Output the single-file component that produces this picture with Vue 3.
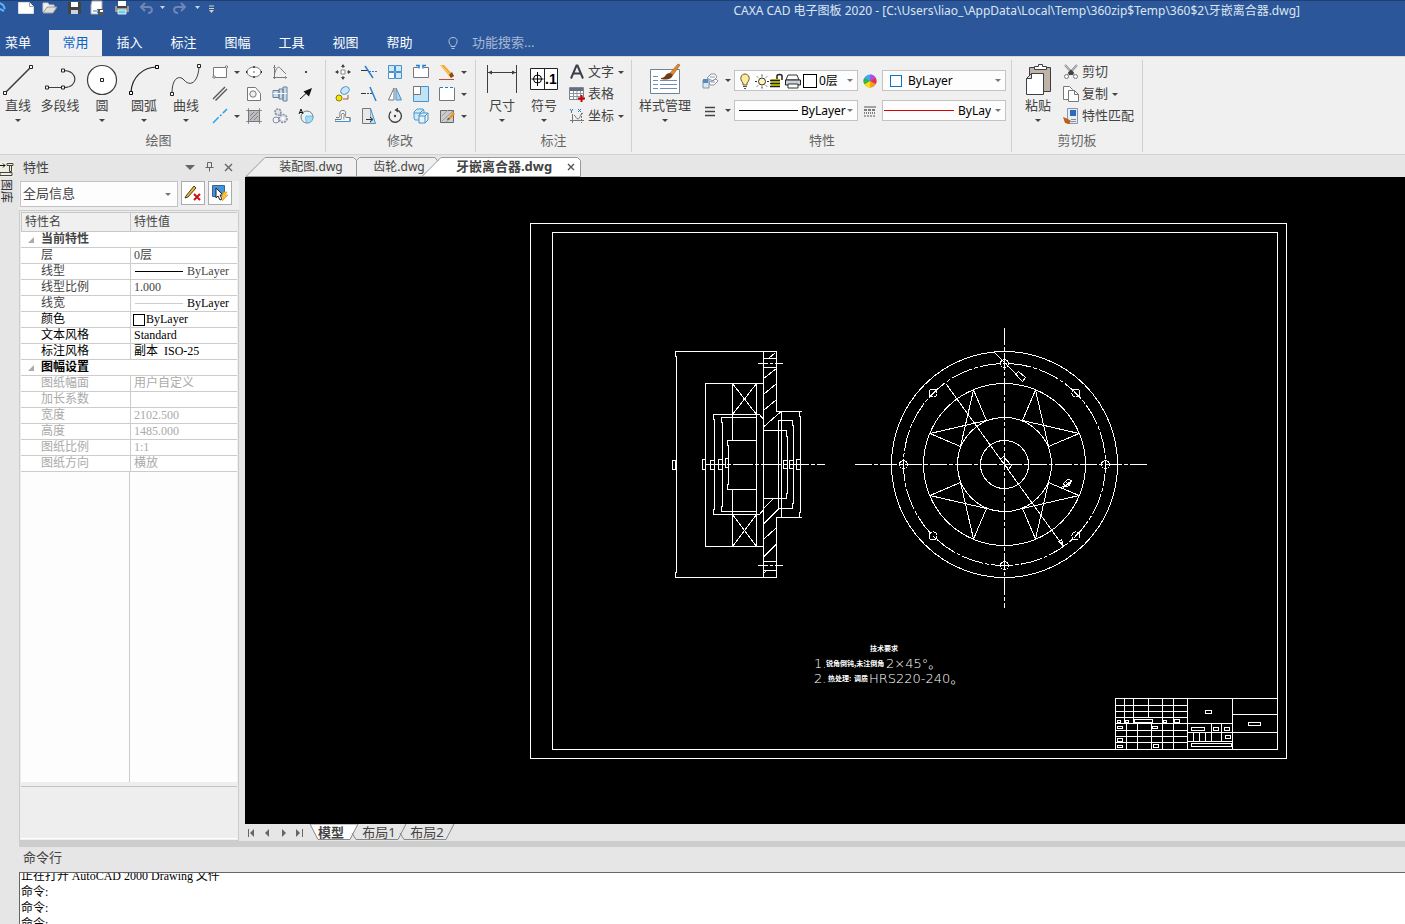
<script setup>
import { ref } from 'vue'

const icons = {
  line: '<path d="M4 30 31 3" stroke="#3b3f46" stroke-width="1.6"/><g fill="#fff" stroke="#222"><path d="M2.500 28.500h3v3h-3zM28.500 2.500h3v3h-3z"/></g>',
  pline: '<path d="M5 24.500h16M21 7.500c14 0 15 17 0 17" stroke="#3b3f46" stroke-width="1.200" fill="none"/><g fill="#fff" stroke="#222"><path d="M2.500 23h3v3h-3zM18.500 23h3v3h-3zM18.500 6h3v3h-3z"/></g>',
  circle: '<circle cx="17" cy="17" r="14.500" fill="#fff" stroke="#3b3f46" stroke-width="1.200"/><path d="M15.500 15.500h3v3h-3z" fill="#fff" stroke="#222"/>',
  arc: '<path d="M4 29C5 14 16 4 30 4" stroke="#222" stroke-width="1.200" fill="none"/><g fill="#fff" stroke="#000"><path d="M2.500 28.500h3v3h-3zM28.500 2.500h3v3h-3z"/></g>',
  curve: '<path d="M3 30c0-16 8-18 12-13 6 7 14 3 15-13" stroke="#3b3f46" fill="none"/><g fill="#fff" stroke="#222"><path d="M1.500 29.500h3v3h-3zM28.500 1.500h3v3h-3z"/></g>',
  dim: '<path d="M2.500 2v28M31.500 2v28M3 9.500h28" stroke="#3b3f46" fill="none"/><path d="M3 9.500l4-2v4zM31 9.500l-4-2v4z" fill="#3b3f46"/>',
  symbol: '<path d="M3.500 5.500h27v21h-27zM17.500 5.500v21" fill="#fff" stroke="#222"/><circle cx="10.500" cy="16" r="4" fill="none" stroke="#000"/><path d="M10.500 9v14M4.500 16h12" stroke="#000"/><text x="18" y="21" font-family="Liberation Sans,sans-serif" font-weight="bold" font-size="14">.1</text>',
  style: '<path d="M2.500 6.500h29v24h-29z" fill="#fff" stroke="#6f8399"/><path d="M5 13.500h5M5 17.500h5M5 21.500h5M5 25.500h5M12 17.500h17M12 21.500h17M12 25.500h17" stroke="#6d8db5"/><path d="M22 10l8-9 2 1-7 10z" fill="#e08a2c" stroke="#9b5a15" stroke-width=".6"/><path d="M13 15c5 0 4-5 9-5l3 2c-2 5-6 5-12 4z" fill="#6b3c16"/>',
  paste: '<path d="M8.500 4.500h21v24h-21z" fill="#bfb3a6" stroke="#3b3f46"/><path d="M13.500 6.500v-3h4v-2h4v2h4v3z" fill="#fff" stroke="#3b3f46"/><path d="M5.500 15.500l5-5h12v21h-17z" fill="#fff" stroke="#3b3f46"/><path d="M5.500 15.500h5v-5z" fill="#ddd" stroke="#3b3f46"/>',
  rect: '<path d="M1.500 3.500h13v10h-13z" fill="#fff" stroke="#777"/><g fill="#fff" stroke="#777"><circle cx="2" cy="13" r="1.200"/><circle cx="14.500" cy="3" r="1.200"/></g>',
  ellipse: '<ellipse cx="8" cy="8" rx="7" ry="5" fill="#fff" stroke="#777"/><path d="M7 3h2M7 13h2M.5 7v2M15.500 7v2M8 7.500v1" stroke="#333" stroke-width="1.500"/>',
  graph: '<path d="M2.500 1v14M1 13.500h14M2.500 10C5 2 7 2 9 5l5 5" fill="none" stroke="#777"/><path d="M1 3.500h3M13.500 12v3" stroke="#999"/>',
  dot: '<path d="M7 7h2v2H7z" fill="#444"/>',
  parallel: '<path d="M1 13 13 1M3.500 14.500 15 3" stroke="#555" stroke-width="1.400"/>',
  polygonHole: '<path d="M1.500 1.500h8l5 6v7h-13z" fill="#fff" stroke="#777"/><circle cx="7" cy="8" r="3.200" fill="#eee" stroke="#777"/>',
  shaft: '<path d="M1 4.500h6v7H1zM7 3h4v10H7zM11 1h4v14h-4z" fill="#c5dcf0" stroke="#6c7f96"/><path d="M1 7.500h14" stroke="#fff"/>',
  arrow: '<path d="M2 13 8 7.500" stroke="#111"/><path d="M14 2 11 10.500 5.500 5.500z" fill="#111"/>',
  cline: '<path d="M1 15 15 1" stroke="#29a3e8" stroke-width="1.500" stroke-dasharray="8 2 2 2"/>',
  hatch: '<path d="M2.500 2.500h11v11h-11z" fill="#b9bcc0" stroke="#777"/><path d="M0 2.500h16M0 13.500h16M2.500 0v16M13.500 0v16M4 12l8-8M4 8l4-4M8 12l4-4" stroke="#777" stroke-width=".8"/>',
  gears: '<circle cx="6" cy="4" r="3" fill="#dfe1ea" stroke="#858da0" stroke-width="1.600" stroke-dasharray="2 1"/><circle cx="11" cy="10.500" r="4" fill="#dfe1ea" stroke="#858da0" stroke-dasharray="2 1" stroke-width="1.600"/><circle cx="11" cy="10.500" r="1.500" fill="#fff"/><circle cx="4" cy="12" r="3" fill="#f2f2f6" stroke="#858da0"/>',
  revolve: '<circle cx="9" cy="9" r="6" fill="#e6f4fc" stroke="#777"/><path d="M8 8h7c0 4-2 7-5 7-2-1-3-3-2-7z" fill="#a5dbf7" stroke="#4a9ad0" stroke-width=".6"/><path d="M1 6 3 1l2 5M2 4.500h2.500" stroke="#111" fill="none"/>',
  move: '<path d="M6 6h4v4H6z" fill="#fff" stroke="#888"/><path d="M8 1v3M8 12v3M1 8h3M12 8h3" stroke="#444"/><path d="M8 0l2 3H6zM8 16l2-3H6zM0 8l3-2v4zM16 8l-3-2v4z" fill="#444"/>',
  trim: '<path d="M0 6.500h7" stroke="#333"/><path d="M8 7.500h8" stroke="#2b7fd0" stroke-dasharray="2 1"/><path d="M4 2l8 12" stroke="#2b7fd0" stroke-width="1.500"/>',
  array: '<path d="M1.500 1.500h6v6h-6zM8.500 1.500h6v6h-6zM1.500 8.500h6v6h-6zM8.500 8.500h6v6h-6z" fill="#cdeafb" stroke="#4a8fc7"/><path d="M2 9h5v5H2z" fill="#fff"/>',
  brk: '<path d="M5 3.500H.5v10h15v-10H11" fill="#fff" stroke="#777"/><path d="M3 1.500h3v3M13 1.500h-3v3" stroke="#1c7dd6" fill="none" stroke-width="1.500"/>',
  pencil: '<path d="M1 1h4l10 11-3 2z" fill="#f5a623"/><path d="M2 1 13 13" stroke="#fbd38d"/><path d="M10 11l3-3 2 4-3 2z" fill="#8b4a1c"/><path d="M0 15.500h15" stroke="#b3513c"/>',
  copy: '<ellipse cx="10" cy="4.500" rx="4.500" ry="3.500" fill="#c9e6f8" stroke="#4a8fc7" transform="rotate(-35 10 4.500)"/><circle cx="4" cy="12" r="3" fill="#f7e400" stroke="#8a8000"/><path d="M8 13h5V9" fill="none" stroke="#b3513c"/>',
  extend: '<path d="M0 7.500h5" stroke="#333"/><path d="M6 7.500h5" stroke="#444" stroke-dasharray="2 1"/><path d="M9 1l6 14" stroke="#2b7fd0" stroke-width="1.500"/>',
  mirror: '<path d="M7 2v12H1.500z" fill="#fff" stroke="#777"/><path d="M9 2v12h5.500z" fill="#a9d4ef" stroke="#4a8fc7"/>',
  scale: '<path d="M.5.5h15v15H.5z" fill="#bfe4f8" stroke="#4a8fc7"/><path d="M.5.5h7v8h-7z" fill="#fff" stroke="#777"/>',
  stretch: '<path d="M.5 1.500v13h15v-13" fill="#fff" stroke="#777"/><path d="M1 1.500h14" stroke="#1c7dd6" stroke-dasharray="3 2"/>',
  offset: '<path d="M1 9.500h3c2-2-1-7 4-7s1 5 3 7h4v4H0v-2h6c1-3-1-6 2-6s0 3 1 6" fill="#f6fafd" stroke="#777"/><path d="M15 9.500v4H0" fill="none" stroke="#4a8fc7"/>',
  taper: '<path d="M1.500.5h8v15h-8z" fill="#e8e8e8" stroke="#777"/><path d="M9.500.5l5 15h-5" fill="#bfe4f8" stroke="#4a8fc7"/><path d="M5 11.500h6M9 9l3 2.500L9 14" stroke="#333" fill="none"/>',
  rotate: '<path d="M4 3.500A6.200 6.200 0 1 0 9.500 2" fill="none" stroke="#444" stroke-width="1.400"/><path d="M11-.5v5L7.500 2z" fill="#444"/><circle cx="8" cy="8" r="1.200" fill="#444"/>',
  block: '<path d="M1 4l3-3h6l1 2v7l-3 2H2l-1-2z" fill="#cfe9f9" stroke="#4a9ad0"/><path d="M1 5h6v6M7 5l3-3" fill="none" stroke="#4a9ad0"/><path d="M6 7l3-2h6v7l-3 3H6z" fill="#e4f3fc" stroke="#4a8fc7"/><path d="M6 8h6v7M12 8l3-3" fill="none" stroke="#4a8fc7"/>',
  edit: '<path d="M1.500 2.500h13v12h-13z" fill="#ccc" stroke="#666"/><path d="M3 13 14 3M3 8l6-6M7 14l7-6" stroke="#999"/><path d="M9 10l5-6 2 2-5 5z" fill="#f0962c"/><path d="M9 10l2 1-3 1z" fill="#333"/>',
  letterA: '<path d="M2 14.500 7.500 1.500h1L14 14.500M4.500 9.500h7" fill="none" stroke="#3b3f46" stroke-width="2"/>',
  table: '<path d="M.5 1.500h14v12H.5z" fill="#fff" stroke="#7c8794"/><path d="M1 2h13v3H1z" fill="#66707c"/><path d="M1 7.500h13M1 10.500h13M4.500 5v8M8 5v8M11.500 5v8" stroke="#8c97a4"/><path d="M12.500 9v7M9 12.500h7" stroke="#c00" stroke-width="2"/>',
  coord: '<path d="M3.500 6v9M1 12.500h14M5 7c2 1 2 4 4 4s2-5 5-6" fill="none" stroke="#777"/><path d="M1 1l1.500 2L4 1M2.500 3v2M9 1l3 3M12 1 9 4" stroke="#2b7fd0"/><path d="M12.500 5v10" stroke="#777" stroke-dasharray="2 1"/>',
  layers: '<path d="M5 5l4-4h4l2 3-4 4zM7 9l7-3 2 2-4 4H8z" fill="#fff" stroke="#8a95a3"/><path d="M1 7h6v8H1z" fill="#dfe7ee" stroke="#8a95a3"/><path d="M1 6h5v4H1z" fill="#4b8bc8"/><path d="M8 4h5M9 9h4" stroke="#8a95a3"/>',
  lines: '<path d="M3 4.500h10M3 8.500h10M3 12.500h10" stroke="#444" stroke-width="1.400"/>',
  wheel: '<circle cx="8" cy="8" r="6.500" fill="#3fa9f5"/><path d="M8 8V1.500a6.500 6.500 0 0 1 5.600 3.200z" fill="#b04ee0"/><path d="M8 8l5.600-3.300a6.500 6.500 0 0 1 0 6.600z" fill="#e8304a"/><path d="M8 8l5.600 3.300A6.500 6.500 0 0 1 8 14.500z" fill="#ff9b1a"/><path d="M8 8v6.500a6.500 6.500 0 0 1-5.600-3.200z" fill="#ffe100"/><path d="M8 8l-5.600 3.300a6.500 6.500 0 0 1 0-6.600z" fill="#37b34a"/>',
  linetypes: '<path d="M2 4h12" stroke="#555"/><path d="M2 7h12" stroke="#555" stroke-dasharray="3 1" stroke-width="1.500"/><path d="M2 10h12" stroke="#555" stroke-dasharray="1 1" stroke-width="1.500"/><path d="M2 13h12" stroke="#555" stroke-dasharray="2 1"/>',
  cut: '<path d="M2 1l9 10M14 1 5 11" stroke="#7d838b" stroke-width="2"/><path d="M2 1l9 10M14 1 5 11" stroke="#eee" stroke-width=".7"/><path d="M5 8.500l3-3 3 3-1 2.500H6z" fill="#444"/><circle cx="3.500" cy="12.500" r="2" fill="#fff" stroke="#777"/><circle cx="12.500" cy="12.500" r="2" fill="#fff" stroke="#777"/>',
  copyDoc: '<path d="M.5.5h6l3 3v10h-9z" fill="#fff" stroke="#777"/><path d="M5.500 4.500h6l4 4v7h-10z" fill="#fff" stroke="#777"/><path d="M11.500 4.500v4h4" fill="none" stroke="#777"/>',
  match: '<path d="M4.500.5h10v15h-10z" fill="#e8eef4" stroke="#8a95a3"/><path d="M7 2h6v6H7z" fill="#2b6cb8"/><path d="M8 11.500h5M8 13.500h5" stroke="#889"/><path d="M0 9l5 2 3 2-2 3-4-1-1-3z" fill="#b9611c"/>'
}

const drawBig = [['line', '直线', 1], ['pline', '多段线', 0], ['circle', '圆', 1], ['arc', '圆弧', 1], ['curve', '曲线', 1]]
const drawSmall = [
  ['rect', '矩形', 1], ['ellipse', '椭圆'], ['graph', '公式曲线'], ['dot', '点'],
  ['parallel', '平行线'], ['polygonHole', '多边形'], ['shaft', '孔轴'], ['arrow', '箭头'],
  ['cline', '中心线', 1], ['hatch', '剖面线'], ['gears', '齿轮'], ['revolve', '局部放大']
]
const modifySmall = [
  ['move', '平移'], ['trim', '裁剪'], ['array', '阵列'], ['brk', '打断'], ['pencil', '删除', 1],
  ['copy', '平移复制'], ['extend', '延伸'], ['mirror', '镜像'], ['scale', '缩放'], ['stretch', '拉伸', 1],
  ['offset', '等距线'], ['taper', '过渡'], ['rotate', '旋转'], ['block', '分解'], ['edit', '编辑', 1]
]
const markSmall = [['letterA', '文字', 1], ['table', '表格', 0], ['coord', '坐标', 1]]
const clipSmall = [['cut', '剪切', 0], ['copyDoc', '复制', 1], ['match', '特性匹配', 0]]

const tabs = ['常用', '插入', '标注', '图幅', '工具', '视图', '帮助']
const activeTab = ref('常用')

const props = [
  { name: '当前特性', group: 1 },
  { name: '层', num: '0', cjk: '层' },
  { name: '线型', line: 'dark', num: 'ByLayer' },
  { name: '线型比例', num: '1.000' },
  { name: '线宽', line: 'pale', num: 'ByLayer', tone: 'value' },
  { name: '颜色', swatch: 1, num: 'ByLayer', tone: 'black' },
  { name: '文本风格', num: 'Standard', tone: 'black' },
  { name: '标注风格', pre: '副本', num: '  ISO-25', tone: 'black' },
  { name: '图幅设置', group: 1, tone: 'black' },
  { name: '图纸幅面', cjk: '用户自定义', tone: 'off' },
  { name: '加长系数', tone: 'off' },
  { name: '宽度', num: '2102.500', tone: 'off' },
  { name: '高度', num: '1485.000', tone: 'off' },
  { name: '图纸比例', num: '1:1', tone: 'off' },
  { name: '图纸方向', cjk: '横放', tone: 'off' }
]

const holes = Array.from({ length: 8 }, (_, i) => {
  const a = (i * Math.PI) / 4
  return { x: 1004.5 + 101 * Math.cos(a), y: 464.5 + 101 * Math.sin(a) }
})
const mirrors = [[1, 1], [-1, 1], [1, -1], [-1, -1]]
const terminals = [
  [672, 460, 3, 9], [702, 459, 3, 10], [710, 460, 4, 9], [718, 459, 4, 10], [725, 458, 3, 9],
  [783, 460, 4, 8], [789, 460, 4, 8], [796, 459, 4, 10]
]
const fields = [
  [1117, 720, 3, 2], [1125, 720, 3, 2], [1134, 719, 18, 3], [1163, 720, 3, 2], [1174, 719, 5, 3],
  [1117, 726, 5, 2], [1152, 726, 5, 2], [1117, 738, 5, 3], [1117, 745, 5, 2], [1153, 744, 5, 3],
  [1205, 710, 6, 3], [1191, 727, 13, 3], [1213, 727, 5, 3], [1224, 727, 5, 3], [1225, 735, 5, 3],
  [1191, 743, 40, 3], [1248, 722, 12, 3]
]
const log = ['命令', '命令', '命令']
</script>

<template>
  <div class="app">
    <header class="top">
      <div class="titlebar">
        <svg class="quick" width="220" height="18" viewBox="0 0 220 18" fill="none">
          <path d="M0 3l3 2 2 4M0 9l4 2" stroke="#5cb3ff" stroke-width="2" />
          <path d="M18.500 2.500h11l4 4v7h-15z" fill="#fff" stroke="#ddd" /><path d="M29.500 2.500v4h4" stroke="#8aa" />
          <path d="M43 12V3h5l1 2h5v3" fill="#f2f2f2" stroke="#ccc" /><path d="M43 13l4-6h10l-4 6z" fill="#ddd" stroke="#999" />
          <path d="M68 2h13v12H68z" fill="#444" /><path d="M71 2h7v5h-7z" fill="#fff" /><path d="M71 10h7v4h-7z" fill="#c8d4e4" />
          <path d="M92 1h10v13H91V5z" fill="#fff" stroke="#aaa" /><path d="M93 11h6l-2-2m2 2-2 2" stroke="#2b7fd0" /><path d="M98 9h6v6h-6z" fill="#555" /><path d="M100 10h3v2h-3z" fill="#fff" />
          <path d="M118 1h8v5h-8z" fill="#fff" /><path d="M115 6h14v6h-14z" fill="#999" /><path d="M117 6h10v2h-10z" fill="#444" /><path d="M118 10h8v4h-8z" fill="#5fd4f5" stroke="#eee" />
          <path d="M142 7h7c4 0 4 6-1 6M145 3l-4 4 4 4" stroke="#7186b4" stroke-width="2" />
          <path d="M184 7h-7c-4 0-4 6 1 6M181 3l4 4-4 4" stroke="#7186b4" stroke-width="2" />
          <path d="M160 6h5l-2.500 3zM195 6h5l-2.500 3z" fill="#c7d1e3" />
          <path d="M209 6h5M209 8.500h5" stroke="#d6cfc3" /><path d="M209 10h5l-2.500 3z" fill="#d6cfc3" />
        </svg>
        <h1>CAXA CAD 电子图板 2020 - [C:\Users\liao_\AppData\Local\Temp\360zip$Temp\360$2\牙嵌离合器.dwg]</h1>
      </div>
      <nav class="tabs">
        <button class="menu">菜单</button>
        <button v-for="t in tabs" :key="t" class="tab" :class="{ on: t === activeTab }" @click="activeTab = t">{{ t }}</button>
        <label class="search">
          <svg width="12" height="14" viewBox="0 0 12 14" fill="none" stroke="#b9c5da"><path d="M4 9.500C1 7 1 1.500 6 1.500S11 7 8 9.500v1H4zM4.500 12.500h3" /></svg>
          <input type="text" placeholder="功能搜索..." aria-label="功能搜索" />
        </label>
      </nav>
    </header>

    <section class="ribbon">
      <div class="group">
        <div class="tools">
          <button v-for="b in drawBig" :key="b[0]" class="big">
            <svg width="34" height="34" viewBox="0 0 34 34" v-html="icons[b[0]]"></svg>
            <span>{{ b[1] }}</span><i v-if="b[2]" class="caret"></i>
          </button>
          <div class="small draw">
            <button v-for="b in drawSmall" :key="b[0]" :aria-label="b[1]">
              <svg width="16" height="16" viewBox="0 0 16 16" fill="none" v-html="icons[b[0]]"></svg><i v-if="b[2]" class="caret"></i>
            </button>
          </div>
        </div>
        <h2>绘图</h2>
      </div>

      <div class="group modify">
        <div class="tools">
          <div class="small edit">
            <button v-for="b in modifySmall" :key="b[0]" :aria-label="b[1]">
              <svg width="16" height="16" viewBox="0 0 16 16" fill="none" v-html="icons[b[0]]"></svg><i v-if="b[2]" class="caret"></i>
            </button>
          </div>
        </div>
        <h2>修改</h2>
      </div>

      <div class="group mark">
        <div class="tools">
          <button class="big"><svg width="34" height="34" viewBox="0 0 34 34" v-html="icons.dim"></svg><span>尺寸</span><i class="caret"></i></button>
          <button class="big"><svg width="34" height="34" viewBox="0 0 34 34" v-html="icons.symbol"></svg><span>符号</span><i class="caret"></i></button>
          <div class="list">
            <button v-for="b in markSmall" :key="b[0]">
              <svg width="16" height="16" viewBox="0 0 16 16" fill="none" v-html="icons[b[0]]"></svg><span>{{ b[1] }}</span><i v-if="b[2]" class="caret"></i>
            </button>
          </div>
        </div>
        <h2>标注</h2>
      </div>

      <div class="group attr">
        <div class="tools">
          <button class="big wide"><svg width="34" height="34" viewBox="0 0 34 34" v-html="icons.style"></svg><span>样式管理</span><i class="caret"></i></button>
          <div class="combos">
            <button class="mini" aria-label="图层"><svg width="16" height="16" viewBox="0 0 16 16" fill="none" v-html="icons.layers"></svg><i class="caret"></i></button>
            <div class="combo layer">
              <svg width="72" height="18" viewBox="0 0 72 18" fill="none">
                <path d="M4 11C0 7 2 2 6 2s6 5 2 9v2H4z" fill="#ffe9a0" stroke="#665b2a" /><path d="M4 14.500h4M5 16.500h2" stroke="#555" />
                <circle cx="23" cy="9.500" r="3.500" fill="#fff2b8" stroke="#333" /><path d="M23 2.500v2M23 14.500v2M16 9.500h2M28 9.500h2M18 4.500l1 1M27 13.500l1 1M28 4.500l-1 1M19 13.500l-1 1" stroke="#333" />
                <path d="M32 7h9v8h-9z" fill="#dcd800" /><path d="M31 8.500h10M31 11.500h10M31 14.500h10" stroke="#222" stroke-width="1.500" /><path d="M38 7V4c0-2 5-2 5 0v4" stroke="#222" stroke-width="1.500" />
                <path d="M49 3h9l2 5H47z" fill="#fff" stroke="#333" /><path d="M46.500 8h15v5h-15z" fill="#ccd3da" stroke="#222" /><path d="M49 12h10v4H49z" fill="#fff" stroke="#333" />
              </svg>
              <b class="sw"></b>
              <select aria-label="图层列表"><option>0层</option></select><i class="caret"></i>
            </div>
            <svg class="mid" width="16" height="16" viewBox="0 0 16 16" fill="none" v-html="icons.wheel"></svg>
            <div class="combo color"><b class="sw blue"></b><select aria-label="颜色"><option>ByLayer</option></select><i class="caret"></i></div>
            <button class="mini" aria-label="线宽"><svg width="16" height="16" viewBox="0 0 16 16" fill="none" v-html="icons.lines"></svg><i class="caret"></i></button>
            <div class="combo width"><b class="rule"></b><select aria-label="线宽列表"><option>ByLayer</option></select><i class="caret"></i></div>
            <svg class="mid" width="16" height="16" viewBox="0 0 16 16" fill="none" v-html="icons.linetypes"></svg>
            <div class="combo type"><b class="rule red"></b><select aria-label="线型列表"><option>ByLayer</option></select><i class="caret"></i></div>
          </div>
        </div>
        <h2>特性</h2>
      </div>

      <div class="group clip">
        <div class="tools">
          <button class="big"><svg width="34" height="34" viewBox="0 0 34 34" v-html="icons.paste"></svg><span>粘贴</span><i class="caret"></i></button>
          <div class="list">
            <button v-for="b in clipSmall" :key="b[0]">
              <svg width="16" height="16" viewBox="0 0 16 16" fill="none" v-html="icons[b[0]]"></svg><span>{{ b[1] }}</span><i v-if="b[2]" class="caret"></i>
            </button>
          </div>
        </div>
        <h2>剪切板</h2>
      </div>
    </section>

    <div class="body">
      <aside class="strip">
        <svg width="14" height="16" viewBox="0 0 14 16" fill="none"><path d="M0 0h14v16H0z" fill="#efefdf" /><path d="M0 4.500h5M3 2.500l2 2-2 2" stroke="#111" /><path d="M7 2.500h6v2H7zM9.500 4.500v6h2v-6M0 11.500h12v3H0z" stroke="#444" /></svg>
        <span>图库</span>
      </aside>

      <div class="right">
        <div class="work">
          <aside class="panel">
            <div class="phead">
              <h3>特性</h3>
              <svg width="52" height="14" viewBox="0 0 52 14" fill="none">
                <path d="M1 5h10l-5 5z" fill="#666" /><path d="M23.500 2.500h4v5h-4zM21.500 7.500h8M25.500 7.500v4" stroke="#666" /><path d="M41 4l7 7M48 4l-7 7" stroke="#666" stroke-width="1.400" />
              </svg>
            </div>
            <div class="pick">
              <div class="combo scope"><select aria-label="选择范围"><option>全局信息</option></select><i class="caret"></i></div>
              <button aria-label="取消选择"><svg width="18" height="18" viewBox="0 0 18 18" fill="none"><path d="M2 12 10 2l2 2-8 9-3 1z" fill="#f2b632" stroke="#4b3b1c" /><path d="M10 10l6 6M16 10l-6 6" stroke="#c11" stroke-width="2" /></svg></button>
              <button aria-label="快速选择"><svg width="18" height="18" viewBox="0 0 18 18" fill="none"><path d="M1.500 1.500h12v11h-12z" fill="#4592d6" stroke="#2c67a3" /><path d="M5 4v10l2-2 2 4 2-1-2-4h3z" fill="#fff" stroke="#222" /><path d="M13 8l-3 5h3l-2 4 6-6h-3l2-3z" fill="#ffc928" stroke="#e08a1c" stroke-width=".6" /></svg></button>
            </div>
            <div class="grid">
              <table>
                <thead><tr><th>特性名</th><th>特性值</th></tr></thead>
                <tbody>
                  <tr v-for="p in props" :key="p.name" :class="p.tone">
                    <th v-if="p.group" colspan="2" class="sec"><i></i>{{ p.name }}</th>
                    <template v-else>
                      <td class="name">{{ p.name }}</td>
                      <td class="val"><div><b v-if="p.line" class="stroke" :class="p.line"></b><b v-if="p.swatch" class="chip"></b><template v-if="p.pre">{{ p.pre }}</template><span v-if="p.num">{{ p.num }}</span>{{ p.cjk }}</div></td>
                    </template>
                  </tr>
                </tbody>
              </table>
              <div class="blank"></div>
              <div class="desc"></div>
            </div>
          </aside>

          <main class="doc">
            <div class="files">
              <svg width="340" height="21" viewBox="0 0 340 21" stroke="#999">
                <path d="M1 20.500 20 1.500H108.500l3 3V20.500z" fill="#f0f0f0" /><path d="M111.500 20.500V4.500l3-3H190l3 4-10 15z" fill="#f0f0f0" /><path d="M177 20.500 196 1.500H332.500l3 3V20.500z" fill="#fff" />
              </svg>
              <button class="f1">装配图.dwg</button>
              <button class="f2">齿轮.dwg</button>
              <button class="f3">牙嵌离合器.dwg</button>
              <button class="close" aria-label="关闭"><svg width="8" height="8" viewBox="0 0 8 8" stroke="#555" stroke-width="1.400"><path d="M1 1l6 6M7 1 1 7" /></svg></button>
            </div>
            <div class="canvas">
              <svg viewBox="245 177 1160 647" fill="none" stroke="#fff" shape-rendering="crispEdges">
                <path d="M530.500 223.500h756v535h-756zM552.500 232.500h725v517h-725z" />

                <path d="M763.500 351.500h-88v5h1v216h-1v5h101v-60h25M763.500 351.500h13v60h25M763.500 351.500v226M763.500 358.500h13M763.500 367.500h13M763.500 561.500h13M763.500 570.500h13" />
                <path d="M758 363.500h25M758 565.500h25" stroke-dasharray="10 2 3 2" />
                <path d="M799.500 411.500v5h1v96h-1v5M781.500 411.500v106M792.500 508.500h-14v-88h14v5h1v78h-1zM763.500 430.500h23v6h1v57h-1v5h-23" />
                <path d="M763.500 383.500h-58v163h58M732.500 383.500v57M732.500 489.500v57M756.500 383.500v163M763.500 419.500l-4-5h-46v5h1v90h-1v5h46l4-5" />
                <path d="M756.500 417.500h-35v5h1v84h-1v5h35M756.500 440.500h-29v5h1v39h-1v5h29" />
                <path d="M732.500 383.500l24 31M756.500 383.500l-24 31M732.500 514.500l24 32M756.500 514.500l-24 32" />
                <path d="M763.500 378.500l13-10M763.500 394.500l13-11M763.500 410.500l13-11M763.500 427l17-15M763.500 508.500l10-10M763.500 524l15-15M763.500 539.500l13-12M763.500 557l13-13M768.500 358.500l7-6M763.500 573.500l3-3" />
                <rect v-for="t in terminals" :key="t[0]" :x="t[0] + 0.5" :y="t[1] + 0.5" :width="t[2]" :height="t[3]" />
                <path d="M705 464.500h120" stroke-dasharray="20 2 4 2" />

                <g>
                  <circle cx="1004.500" cy="464.500" r="113" />
                  <circle cx="1004.500" cy="464.500" r="101" stroke-dasharray="22 2 4 2" />
                  <circle cx="1004.500" cy="464.500" r="81" />
                  <circle cx="1004.500" cy="464.500" r="47" />
                  <circle cx="1004.500" cy="464.500" r="24" />
                  <circle v-for="(h, i) in holes" :key="i" :cx="h.x" :cy="h.y" r="4" />
                  <path v-for="(m, i) in mirrors" :key="i" :transform="`translate(1004.5 464.5) scale(${m[0]} ${m[1]})`" d="M18-44 31-74.500 44-18 74.500-31z" />
                  <path d="M946.500 384.500l117 162" />
                  <path d="M1063.500 546.500l-5-5 3-2zM1060 544l2-2" />
                  <path d="M994.500 352.500l24 24M1015.500 374.500l3-3 7 6-3 4zM1000.500 459.500l3-3 8 9-3 4zM1062.500 488.500l10-9M1063 484l5-5 4 2-5 6zM1061.500 486.500h6M1066 482l4 4" />
                </g>
                <path d="M855 464.500h293" stroke-dasharray="17 2 4 2" />
                <path d="M1004.500 328v280" stroke-dasharray="17 2 4 2" />

                <path d="M1277.500 698.500h-162v51M1187.500 698.500v51M1232.500 698.500v51M1115.500 705.500h72M1115.500 711.500h72M1115.500 717.500h72M1115.500 723.500h117M1115.500 730.500h72M1115.500 736.500h72M1115.500 742.500h72M1124.500 698.500v25M1133.500 698.500v25M1148.500 698.500v19M1162.500 698.500v51M1173.500 698.500v51M1126.500 723.500v26M1137.500 723.500v26M1151.500 723.500v26M1187.500 732.500h90M1187.500 741.500h45M1211.500 723.500v18M1221.500 723.500v18M1193.500 732.500v9M1199.500 732.500v9M1205.500 732.500v9M1232.500 714.500h45" />
                <rect v-for="(f, i) in fields" :key="i" :x="f[0] + 0.5" :y="f[1] + 0.5" :width="f[2]" :height="f[3]" fill="#000" />

                <g class="note" fill="#fff" stroke="none">
                  <text class="cn" x="870" y="651">技术要求</text>
                  <text x="814" y="668">1.</text><text class="cn" x="826" y="666">锐角倒钝,未注倒角</text><text x="886" y="668">2×45°。</text>
                  <text x="814" y="683">2.</text><text class="cn" x="828" y="681">热处理:</text><text class="cn" x="854" y="681">调质</text><text x="869" y="683">HRS220-240。</text>
                </g>
              </svg>
            </div>
            <div class="sheets">
              <svg width="210" height="18" viewBox="0 0 210 18">
                <g fill="#666"><path d="M3 5h1v8H3zM9 5v8L5 9zM24 5v8l-4-4zM37 5v8l4-4zM51 5v8l4-4zM57 5h1v8h-1z" /></g>
                <path d="M65 0l8 15.500H105L113 0z" fill="#fff" stroke="#888" /><path d="M107 9l4 6.500H153L161 0M155 9l4 6.500H201L209 0" fill="none" stroke="#888" />
              </svg>
              <button class="on">模型</button><button>布局1</button><button>布局2</button>
            </div>
          </main>
        </div>

        <section class="command">
          <h3>命令行</h3>
          <div class="log" role="log">
            <p>正在打开 <span>AutoCAD 2000 Drawing</span> 文件</p>
            <p v-for="(l, i) in log" :key="i">{{ l }}<span>:</span></p>
          </div>
        </section>
      </div>
    </div>
  </div>
</template>

<style>
html, body, #app { height: 100%; margin: 0; }
body { overflow: hidden; }
</style>

<style scoped>
* { box-sizing: border-box; }
.app { height: 100%; display: flex; flex-direction: column; overflow: hidden; background: #e6e6e6; color: #444; font: 13px/16px "Noto Sans", "Noto Sans CJK SC", sans-serif; }
button, select, input { font: inherit; color: inherit; border: 0; padding: 0; margin: 0; background: none; white-space: nowrap; }
h1, h2, h3, p { margin: 0; font: inherit; }
svg { display: block; flex: none; }
.caret { width: 0; height: 0; border: 3px solid transparent; border-top: 3px solid #444; border-bottom: 0; flex: none; }

.top { background: #2b579a; border-top: 1px solid #1f3f73; color: #fff; }
.titlebar { height: 29px; display: flex; justify-content: space-between; padding-right: 105px; }
.quick { margin-top: -1px; }
.titlebar h1 { font-size: 12px; line-height: 20px; color: #dde5f1; white-space: nowrap; }
.tabs { display: flex; height: 26px; }
.tabs button { width: 53px; margin-right: 1px; line-height: 24px; padding-bottom: 2px; }
.tabs .menu { width: 36px; margin-right: 13px; }
.tabs .on { background: #f0f0f0; color: #0a64c8; }
.search { display: flex; align-items: center; gap: 13px; margin-left: 20px; }
.search input { width: 120px; outline: 0; padding-bottom: 2px; }
.search input::placeholder { color: #a9b8d3; opacity: 1; }

.ribbon { display: flex; height: 99px; padding-top: 3px; margin-left: -3px; background: #f0f0f0; border-top: 1px solid #d8d8d8; border-bottom: 1px solid #d2d2d2; }
.group { height: 92px; border-right: 1px solid #d0d0d0; display: flex; flex-direction: column; justify-content: space-between; width: 156px; }
.group:first-child { width: 329px; }
.modify { width: 150px; padding-left: 4px; }
.mark { padding-left: 5px; }
.attr { width: 380px; padding-left: 6px; }
.clip { width: 131px; padding-left: 5px; }
.group h2 { text-align: center; color: #666; line-height: 18px; padding: 0 5px 3px 0; }
.tools { display: flex; height: 68px; }
.big { width: 42px; display: flex; flex-direction: column; align-items: center; padding-top: 3px; }
.big span { line-height: 17px; }
.big .caret { margin-top: 5px; }
.big.wide { width: 54px; }
.small { display: grid; grid-auto-rows: 22px; margin-top: 1px; }
.draw { grid-template-columns: 34px 26px 26px 26px; }
.edit { grid-template-columns: 26px 26px 26px 26px 38px; }
.small button { display: flex; align-items: center; gap: 6px; padding-left: 5px; }
.list { display: flex; flex-direction: column; margin-top: 1px; padding-left: 4px; }
.list button { height: 22px; display: flex; align-items: center; gap: 3px; }
.list span { padding-bottom: 2px; }
.list .caret { margin-left: 1px; }
.combos { display: grid; grid-template-columns: 42px 124px 24px 124px; grid-auto-rows: 21px; row-gap: 9px; margin-top: 10px; }
.mini { display: flex; align-items: center; gap: 7px; padding-left: 10px; }
.mid { place-self: center; }
.combo { position: relative; display: flex; align-items: center; height: 21px; background: #fdfdfd; border: 1px solid #c3c3c3; color: #000; font-size: 12px; }
.combo select { appearance: none; width: 100%; height: 100%; outline: 0; }
.combo > .caret { position: absolute; right: 4px; top: 8px; border-top-color: #777; }
.combo > svg, .combo > b { position: absolute; }
.layer > svg { left: 4px; }
.layer select { padding-left: 84px; }
.layer .sw { left: 68px; width: 14px; height: 14px; border: 1px solid #000; background: #fff; }
.color .sw { left: 7px; width: 12px; height: 12px; border: 1px solid #0a72c8; }
.color select { padding-left: 25px; }
.rule { left: 4px; width: 59px; height: 1px; background: #000; }
.rule.red { left: 1px; width: 70px; background: #d00; }
.width select { padding-left: 66px; }
.type select { padding: 0 14px 0 75px; }

.body { flex: 1; display: flex; min-height: 0; }
.strip { width: 19px; padding-top: 6px; }
.strip span { display: block; writing-mode: vertical-rl; text-orientation: sideways; font-size: 12px; line-height: 18px; width: 18px; margin: 2px 0 0 -3px; color: #333; }
.right { flex: 1; min-width: 0; display: flex; flex-direction: column; }
.work { flex: 1; min-height: 0; display: flex; }
.panel { width: 220px; margin-right: 6px; display: flex; flex-direction: column; background: #eee; }
.phead { height: 26px; display: flex; align-items: center; justify-content: space-between; padding: 0 3px 2px 4px; background: #e6e6e6; }
.phead h3 { line-height: 22px; }
.pick { display: flex; gap: 3px; height: 29px; padding-left: 1px; }
.pick button { width: 24px; height: 24px; display: grid; place-content: center; background: #fff; border: 1px solid #ababab; }
.scope { width: 158px; height: 26px; font-size: 13px; color: #444; }
.scope > .caret { top: 11px; right: 6px; }
.scope select { padding: 0 0 2px 2px; }
.grid { flex: 1; min-height: 0; display: flex; flex-direction: column; border: 1px solid #ccc; background: #eee; padding: 1px; font: 12px/15px "Liberation Serif", "Noto Sans CJK SC", serif; }
table { width: 100%; border-collapse: separate; border-spacing: 0; table-layout: fixed; background: #fff; }
thead th { height: 20px; padding: 0 3px; background: #f0f0f0; border: 1px solid #c8c8c8; border-width: 1px 0 1px 1px; font-weight: 400; text-align: left; line-height: 18px; }
thead th:first-child { width: 109px; }
tbody tr { height: 16px; }
tbody th, tbody td { height: 16px; padding: 0; border-bottom: 1px solid #ccc; text-align: left; line-height: 15px; white-space: nowrap; }
.sec { padding-left: 20px; position: relative; }
.sec i { position: absolute; left: 7px; top: 5px; border: 3px solid #aaa; border-top-color: transparent; border-left-color: transparent; }
.name { padding-left: 20px; }
.val div { height: 15px; display: flex; align-items: center; border-left: 1px solid #ccc; padding-left: 3px; overflow: hidden; }
.val span, .log span { font: 12px/15px "Liberation Serif", serif; white-space: pre; }
.black, .value .val { color: #000; }
.off { color: #aaa; }
.stroke { width: 48px; height: 1px; margin: 0 4px 0 1px; background: #000; }
.stroke.pale { background: #ccc; }
.chip { width: 12px; height: 12px; border: 1px solid #000; margin: 0 1px 0 -1px; }
.blank { flex: 1; background: linear-gradient(to right, transparent 108px, #ccc 108px, #ccc 109px, transparent 109px), #fdfdfd; }
.desc { height: 53px; margin-top: 4px; border-top: 1px solid #c3c3c3; border-bottom: 1px solid #fff; }

.doc { flex: 1; min-width: 0; display: flex; flex-direction: column; }
.files { position: relative; display: flex; height: 22px; flex: none; }
.files > svg { position: absolute; left: 0; top: 1px; }
.files button { position: relative; line-height: 22px; font-size: 12px; padding-top: 1px; }
.files .f1 { width: 112px; padding-left: 20px; }
.files .f2 { width: 84px; }
.files .f3 { width: 122px; font-weight: 700; font-size: 13px; line-height: 20px; padding: 0 0 1px 4px; }
.close { display: grid; place-items: center; width: 16px; }
.canvas { flex: 1; min-height: 0; background: #000; }
.canvas svg { width: 100%; height: 100%; }
.note text { font: 200 13px "DejaVu Sans", "Noto Sans CJK SC", sans-serif; }
.note .cn { font: 700 7px "Noto Sans CJK SC", sans-serif; }
.sheets { position: relative; height: 17px; flex: none; display: flex; padding-left: 62px; }
.sheets > svg { position: absolute; left: 0; top: 0; }
.sheets button { position: relative; width: 48px; line-height: 14px; height: 15px; }
.sheets .on { font-weight: 700; }

.command { flex: none; border-top: 6px solid #cdcdcd; }
.command h3 { height: 25px; line-height: 21px; padding-left: 4px; }
.log { height: 52px; overflow: hidden; background: #fff; border: 1px solid #666; border-width: 1px 0 0 1px; color: #000; padding-left: 1px; font: 12px/16px "Noto Sans CJK SC", sans-serif; }
.log p { height: 16px; white-space: nowrap; }
.log p:first-child { margin-top: -6px; }
</style>
